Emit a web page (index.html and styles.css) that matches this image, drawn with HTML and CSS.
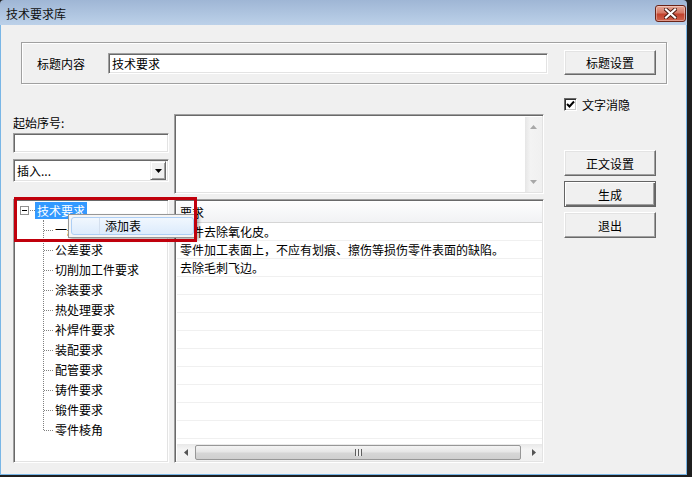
FILE: index.html
```html
<!DOCTYPE html>
<html lang="zh-CN">
<head>
    <meta charset="UTF-8">
    <title>技术要求库</title>
    <link rel="stylesheet" href="styles.css">
</head>
<body>
<div class="frame">
    <div class="titlebar">
        <span class="title">技术要求库</span>
        <button class="close-btn">
            <svg width="13" height="11" viewBox="0 0 13 11">
                <path d="M2 1.5 L11 9.5 M11 1.5 L2 9.5" stroke="#4a1a10" stroke-width="4" stroke-linecap="square"/>
                <path d="M2 1.5 L11 9.5 M11 1.5 L2 9.5" stroke="#fff" stroke-width="2.2" stroke-linecap="square"/>
            </svg>
        </button>
    </div>

    <div class="client">
        <div class="group">
            <span class="group-label">标题内容</span>
            <div class="field title-field">技术要求</div>
            <button class="button title-btn">标题设置</button>
        </div>

        <div class="check-row">
            <span class="checkbox">
                <svg width="9" height="9" viewBox="0 0 9 9"><path d="M1 4 L3.5 6.5 L8 1.5" stroke="#000" stroke-width="2" fill="none"/></svg>
            </span>
            <span>文字消隐</span>
        </div>

        <div class="main">
            <div class="left-col">
                <div class="start-label">起始序号:</div>
                <div class="field start-field"></div>
                <div class="field combo">
                    <span class="combo-text">插入...</span>
                    <span class="combo-btn">
                        <svg width="7" height="4" viewBox="0 0 7 4"><path d="M0 0 H7 L3.5 4 Z" fill="#000"/></svg>
                    </span>
                </div>
                <div class="field tree">
                    <div class="tree-root">
                        <span class="expander"></span>
                        <span class="root-line"></span>
                        <span class="selected">技术要求</span>
                    </div>
                    <ul class="tree-children">
                        <li>一般要求</li>
                        <li>公差要求</li>
                        <li>切削加工件要求</li>
                        <li>涂装要求</li>
                        <li>热处理要求</li>
                        <li>补焊件要求</li>
                        <li>装配要求</li>
                        <li>配管要求</li>
                        <li>铸件要求</li>
                        <li>锻件要求</li>
                        <li>零件棱角</li>
                    </ul>
                </div>
            </div>

            <div class="mid-col">
                <div class="field memo">
                    <div class="memo-text"></div>
                    <div class="vscroll">
                        <svg width="7" height="4" viewBox="0 0 7 4"><path d="M0 4 H7 L3.5 0 Z" fill="#a8a8a8"/></svg>
                        <svg width="7" height="4" viewBox="0 0 7 4"><path d="M0 0 H7 L3.5 4 Z" fill="#a8a8a8"/></svg>
                    </div>
                </div>
                <div class="field list">
                    <div class="list-head">要求</div>
                    <div class="list-rows">
                        <div class="row">零件去除氧化皮。</div>
                        <div class="row">零件加工表面上，不应有划痕、擦伤等损伤零件表面的缺陷。</div>
                        <div class="row">去除毛刺飞边。</div>
                        <div class="row"></div>
                        <div class="row"></div>
                        <div class="row"></div>
                        <div class="row"></div>
                        <div class="row"></div>
                        <div class="row"></div>
                        <div class="row"></div>
                        <div class="row"></div>
                        <div class="row"></div>
                        <div class="row"></div>
                    </div>
                    <div class="hscroll">
                        <span class="arrow">
                            <svg width="4" height="7" viewBox="0 0 4 7"><path d="M4 0 V7 L0 3.5 Z" fill="#555"/></svg>
                        </span>
                        <span class="thumb"><span class="grip"></span></span>
                        <span class="arrow">
                            <svg width="4" height="7" viewBox="0 0 4 7"><path d="M0 0 V7 L4 3.5 Z" fill="#555"/></svg>
                        </span>
                    </div>
                </div>
            </div>

            <div class="right-col">
                <button class="button">正文设置</button>
                <button class="button default">生成</button>
                <button class="button">退出</button>
            </div>
        </div>

        <div class="ctx-menu">
            <div class="ctx-item">添加表</div>
        </div>
        <div class="mark"></div>
    </div>
</div>
</body>
</html>
```

FILE: styles.css
```css
* {
    box-sizing: border-box;
}
body {
    margin: 0;
    width: 692px;
    height: 477px;
    background: #1f1f1f;
    font-family: "Noto Sans CJK SC", "Liberation Sans", sans-serif;
    font-size: 12px;
    color: #000;
    overflow: hidden;
}
.frame {
    width: 687px;
    height: 475px;
    display: flex;
    flex-direction: column;
}
.titlebar {
    height: 25px;
    display: flex;
    align-items: flex-start;
    justify-content: space-between;
    background: linear-gradient(#9fb6d5, #bcd1e9);
    border-radius: 4px 4px 0 0;
}
.title {
    padding-left: 6px;
    line-height: 27px;
    color: #111;
}
.close-btn {
    width: 31px;
    height: 17px;
    margin: 5px 1px 0 0;
    padding: 0;
    display: flex;
    align-items: center;
    justify-content: center;
    border: 1px solid #6b2418;
    border-radius: 3px;
    background: linear-gradient(#e5a797, #d67a66 45%, #c2422c 55%, #d0654f);
    box-shadow: inset 0 0 0 1px rgba(255, 255, 255, 0.35);
}
.client {
    position: relative;
    flex: 1;
    background: #f0f0f0;
    border: 1px solid #79b6e6;
    border-top: none;
    padding-top: 17px;
}

/* shared control looks */
.field {
    background: #fff;
    border: 1px solid;
    border-color: #a0a0a0 #fff #fff #a0a0a0;
    box-shadow: inset 1px 1px 0 #696969, inset -1px -1px 0 #e3e3e3;
    padding: 1px;
}
.button {
    font: inherit;
    background: #f0f0f0;
    border: 1px solid;
    border-color: #fff #696969 #696969 #fff;
    box-shadow: inset -1px -1px 0 #a0a0a0, inset 1px 1px 0 #e3e3e3;
    padding: 0;
    color: #000;
}
.button.default {
    border-color: #646464;
    box-shadow: inset 1px 1px 0 #fff, inset -1px -1px 0 #696969, inset -2px -2px 0 #a0a0a0;
}

.group {
    margin-left: 20px;
    width: 646px;
    height: 42px;
    display: flex;
    align-items: center;
    padding-left: 15px;
    border: 1px solid #a0a0a0;
    box-shadow: inset 1px 1px 0 #fff, 1px 1px 0 #fff;
}
.group-label {
    width: 71px;
}
.title-field {
    width: 440px;
    height: 21px;
    padding: 2px 3px;
    line-height: 15px;
}
.title-btn {
    width: 92px;
    height: 25px;
    margin: -1px 0 0 16px;
}

.check-row {
    margin-top: 14px;
    height: 13px;
    padding-left: 563px;
    display: flex;
    align-items: center;
    gap: 5px;
}
.checkbox {
    width: 13px;
    height: 13px;
    display: flex;
    align-items: center;
    justify-content: center;
    background: #fff;
    border: 1px solid;
    border-color: #6a6a6a #fff #fff #6a6a6a;
    box-shadow: inset 1px 1px 0 #303030, inset -1px -1px 0 #c8c8c8;
}

.main {
    display: flex;
    margin-top: 3px;
}
.left-col {
    margin-left: 12px;
    width: 156px;
    display: flex;
    flex-direction: column;
}
.start-label {
    height: 19px;
    line-height: 18px;
}
.start-field {
    height: 20px;
}
.combo {
    height: 23px;
    margin-top: 6px;
    display: flex;
    align-items: center;
    justify-content: space-between;
    padding: 2px 2px 2px 3px;
}
.combo-btn {
    width: 16px;
    height: 19px;
    display: flex;
    align-items: center;
    justify-content: center;
    background: #f0f0f0;
    border: 1px solid;
    border-color: #f0f0f0 #696969 #696969 #f0f0f0;
    box-shadow: inset 1px 1px 0 #fff, inset -1px -1px 0 #a0a0a0;
}

.tree {
    height: 264px;
    margin-top: 17px;
    padding: 0;
}
.tree-root {
    height: 20px;
    display: flex;
    align-items: center;
    padding-left: 6px;
}
.expander {
    position: relative;
    width: 9px;
    height: 9px;
    border: 1px solid #919191;
    background: #fff;
}
.expander::after {
    content: "";
    position: absolute;
    left: 1px;
    top: 3px;
    width: 5px;
    height: 1px;
    background: #000;
}
.root-line {
    width: 5px;
    margin-left: 1px;
    border-top: 1px dotted #808080;
}
.selected {
    padding: 0 2px;
    height: 17px;
    line-height: 17px;
    background: #3399ff;
    color: #fff;
}
.tree-children {
    position: relative;
    list-style: none;
    margin: 0;
    padding: 0;
}
.tree-children::before {
    content: "";
    position: absolute;
    left: 29px;
    top: 0;
    height: 210px;
    border-left: 1px dotted #808080;
}
.tree-children li {
    position: relative;
    height: 20px;
    line-height: 20px;
    padding-left: 41px;
}
.tree-children li::before {
    content: "";
    position: absolute;
    left: 30px;
    top: 10px;
    width: 9px;
    border-top: 1px dotted #808080;
}

.mid-col {
    margin-left: 5px;
    width: 370px;
    display: flex;
    flex-direction: column;
}
.memo {
    height: 80px;
    display: flex;
    padding: 2px 1px 1px 2px;
}
.memo-text {
    flex: 1;
}
.vscroll {
    width: 17px;
    display: flex;
    flex-direction: column;
    justify-content: space-between;
    align-items: center;
    padding: 8px 0 8px;
    background: linear-gradient(90deg, #e6e6e6, #f3f3f3 30%, #f0f0f0);
}
.list {
    height: 264px;
    margin-top: 5px;
    display: flex;
    flex-direction: column;
    padding: 2px 1px 1px 2px;
}
.list-head {
    height: 21px;
    line-height: 21px;
    padding-left: 3px;
    background: linear-gradient(#fdfdfd, #f1f2f4);
    border-bottom: 1px solid #d5d5d5;
}
.list-rows {
    flex: 1;
    overflow: hidden;
}
.row {
    height: 18px;
    line-height: 18px;
    padding-left: 3px;
    border-bottom: 1px solid #f0f0f0;
    white-space: nowrap;
}
.hscroll {
    height: 17px;
    display: flex;
    align-items: stretch;
    background: linear-gradient(#e8e8e8, #f4f4f4 30%, #f0f0f0);
}
.hscroll .arrow {
    width: 17px;
    display: flex;
    align-items: center;
    justify-content: center;
}
.thumb {
    flex: 1;
    margin: 1px 4px 1px 1px;
    display: flex;
    align-items: center;
    justify-content: center;
    border: 1px solid #979797;
    border-radius: 2px;
    background: linear-gradient(#f4f4f4, #e6e6e6 45%, #d6d6d6 55%, #cfcfcf);
}
.grip {
    width: 7px;
    height: 7px;
    background: repeating-linear-gradient(90deg, #5f5f5f 0 1px, #eee 1px 3px);
}

.right-col {
    margin-left: 20px;
    width: 92px;
    padding-top: 36px;
    display: flex;
    flex-direction: column;
    gap: 5px;
}
.right-col .button {
    height: 26px;
}

/* popup menu and the red note frame drawn over the tree */
.ctx-menu {
    position: absolute;
    left: 67px;
    top: 189px;
    width: 129px;
    height: 24px;
    padding: 2px;
    background: #f5f5f5;
    border: 1px solid #979797;
    box-shadow: 2px 2px 3px rgba(0, 0, 0, 0.3);
}
.ctx-item {
    position: relative;
    height: 18px;
    line-height: 16px;
    padding-left: 33px;
    border: 1px solid #aecff5;
    border-radius: 3px;
    background: linear-gradient(#f1f7fe, #dcebfc);
}
.ctx-item::before {
    content: "";
    position: absolute;
    left: 27px;
    top: 0;
    bottom: 0;
    border-left: 1px solid #d4dfee;
}
.mark {
    position: absolute;
    left: 13px;
    top: 172px;
    width: 183px;
    height: 45px;
    border: 3px solid #c0000c;
}
```
